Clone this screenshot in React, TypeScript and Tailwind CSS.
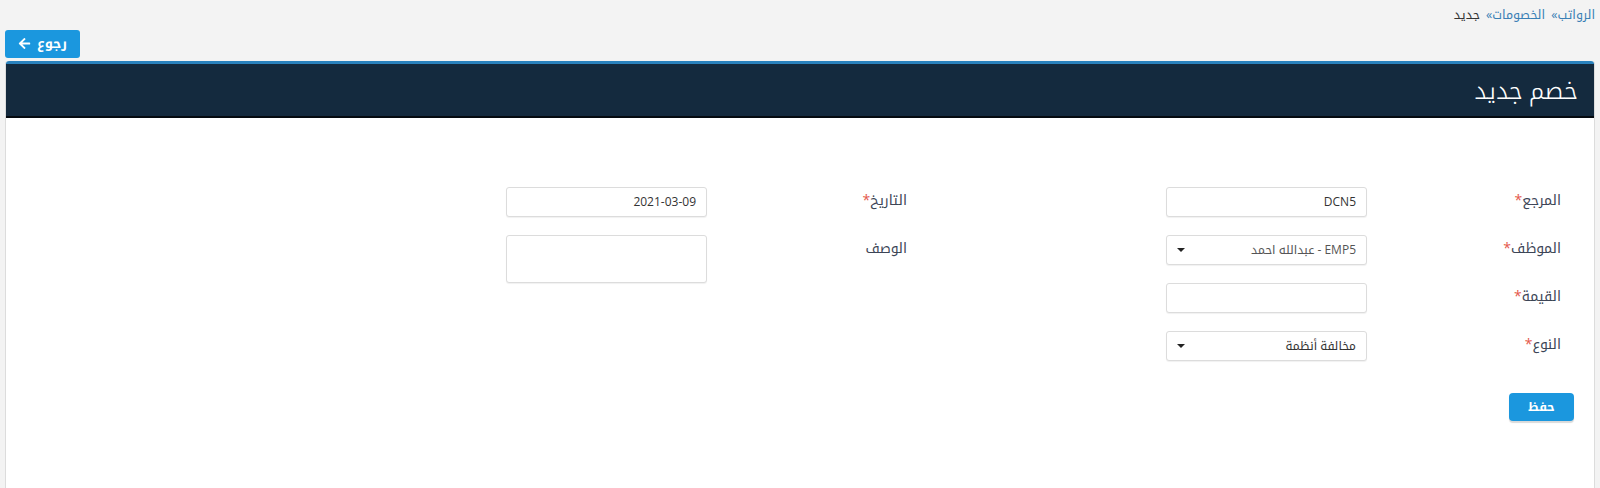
import { FaArrowLeft } from "react-icons/fa"

const font = {
  fontFamily: '"Open Sans", "Noto Kufi Arabic", "Noto Sans Arabic", "DejaVu Sans", sans-serif',
}

const Label = ({ text, required }: { text: string; required?: boolean }) => (
  <div className="w-[194px] pt-[2px] text-[14px] text-[#3c4556]">
    {text}
    {required && <span className="text-[#e4574b]">*</span>}
  </div>
)

const Box = ({ children, tall }: { children?: React.ReactNode; tall?: boolean }) => (
  <div
    className={`flex w-[201px] items-center justify-between rounded-[3px] border border-[#dcdcdc] bg-white px-[10px] text-[12px] text-[#333] shadow-[0_1px_1px_rgba(0,0,0,0.06)] ${
      tall ? "h-[48px]" : "h-[30px]"
    }`}
  >
    {children}
  </div>
)

const Caret = () => (
  <span className="mr-[4px] h-0 w-0 border-x-[4px] border-t-[4px] border-x-transparent border-t-[#222]" />
)

export default function App() {
  return (
    <div dir="rtl" style={font} className="min-h-[488px] bg-[#f3f3f3] px-[5px] pt-[6px]">
      <div className="flex items-center text-[12.5px]">
        <a className="text-[#3a7fb5]">الرواتب</a>
        <span className="ml-[6px] text-[#3a7fb5]">»</span>
        <a className="text-[#3a7fb5]">الخصومات</a>
        <span className="ml-[6px] text-[#3a7fb5]">»</span>
        <span className="text-[#333]">جديد</span>
      </div>
      <div className="mt-[5px] flex justify-end">
        <button className="flex h-[28px] w-[75px] items-center justify-center gap-[6px] rounded-[3px] bg-[#1b97de] text-[13px] font-bold text-white">
          رجوع
          <FaArrowLeft className="text-[13px]" />
        </button>
      </div>
      <div className="mt-[3px] min-h-[430px] rounded-t-[3px] border-x border-[#dcdcdc] bg-white">
        <div className="flex h-[57px] items-center rounded-t-[3px] border-t-[3px] border-b-2 border-t-[#2a82bd] border-b-[#050a10] bg-[#142a3e] pr-[16px]">
          <h1 className="text-[24px] font-light text-white">خصم جديد</h1>
        </div>
        <div className="pt-[69px] pr-[33px]">
          <div className="flex gap-[259px]">
            <div className="flex flex-col gap-[18px]">
              <div className="flex">
                <Label text="المرجع" required />
                <Box>
                  <span>DCN5</span>
                </Box>
              </div>
              <div className="flex">
                <Label text="الموظف" required />
                <Box>
                  <span className="text-[#555]">EMP5 - عبدالله احمد</span>
                  <Caret />
                </Box>
              </div>
              <div className="flex">
                <Label text="القيمة" required />
                <Box />
              </div>
              <div className="flex">
                <Label text="النوع" required />
                <Box>
                  <span>مخالفة أنظمة</span>
                  <Caret />
                </Box>
              </div>
            </div>
            <div className="flex flex-col gap-[18px]">
              <div className="flex">
                <div className="w-[200px]">
                  <Label text="التاريخ" required />
                </div>
                <Box>
                  <span>2021-03-09</span>
                </Box>
              </div>
              <div className="flex">
                <div className="w-[200px]">
                  <Label text="الوصف" />
                </div>
                <Box tall />
              </div>
            </div>
          </div>
          <button className="mt-[32px] mr-[-13px] h-[28px] w-[65px] rounded-[4px] bg-[#1b97de] text-[12px] font-bold text-white shadow-[0_2px_1px_rgba(0,0,0,0.15)]">
            حفظ
          </button>
        </div>
      </div>
    </div>
  )
}
